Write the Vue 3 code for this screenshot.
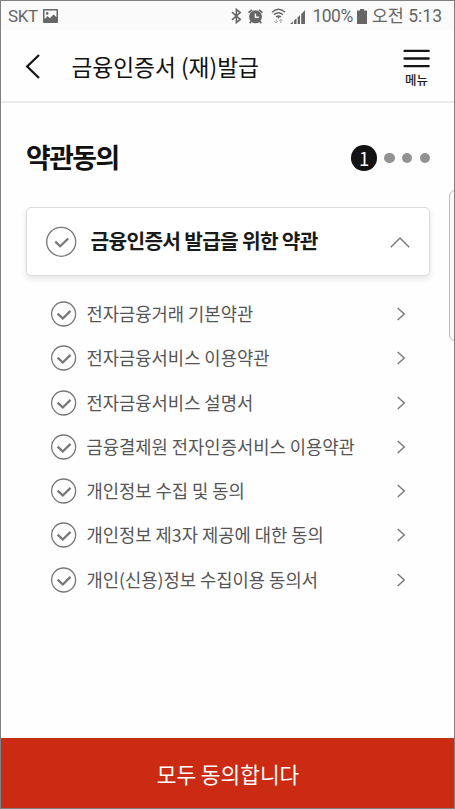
<script setup>
const terms = [
  '전자금융거래 기본약관',
  '전자금융서비스 이용약관',
  '전자금융서비스 설명서',
  '금융결제원 전자인증서비스 이용약관',
  '개인정보 수집 및 동의',
  '개인정보 제3자 제공에 대한 동의',
  '개인(신용)정보 수집이용 동의서',
]
</script>

<template>
  <div class="screen">
    <div class="status">
      <span class="carrier">SKT</span>
      <svg class="photo" width="15" height="14" viewBox="0 0 15 14">
        <path fill="#666" fill-rule="evenodd" d="M1 0h13q1 0 1 1v12q0 1-1 1H1q-1 0-1-1V1q0-1 1-1zM1.5 1.5v8.8l3-3.3 2.3 2.2 3.7-3.7 3 2.8V1.5zM4.2 3.1a1.3 1.3 0 1 1 0 2.6 1.3 1.3 0 0 1 0-2.6z" />
      </svg>
      <svg class="bluetooth" width="11" height="16" viewBox="0 0 11 16">
        <path fill="none" stroke="#666" stroke-width="1.6" d="M1 4.2l8.2 7.2-3.8 3.2V1.4l3.8 3.2L1 11.8" />
      </svg>
      <svg class="alarm" width="15" height="15" viewBox="0 0 15 15">
        <circle cx="7.5" cy="7.8" r="6.5" fill="#666" />
        <path d="M.5 3.7L4 .8M14.5 3.7L11 .8M3.2 12.3L1.8 14.2M11.8 12.3l1.4 1.9" stroke="#666" stroke-width="1.7" />
        <path d="M7.4 4.4v3.8h3.5" fill="none" stroke="#fafafa" stroke-width="1.4" />
      </svg>
      <svg class="wifi" width="15" height="16" viewBox="0 0 15 16">
        <path d="M1 4.2Q7.5-1.5 14 4.2M3 6.7q4.5-4 9 0M5 9q2.5-2 5 0" fill="none" stroke="#666" stroke-width="1.4" />
        <circle cx="7.5" cy="9.6" r="1" fill="#666" />
        <path d="M5.2 15v-3.6M3.5 13.3l1.7 1.7 1.7-1.7M9.8 15v-3.6M8.1 12.9l1.7-1.7 1.7 1.7" fill="none" stroke="#aaa" stroke-width="1" />
      </svg>
      <svg class="signal" width="16" height="15" viewBox="0 0 16 15">
        <path d="M0 15l3-2.5V15zM4 11.5l2.5-2.2V15H4zM7.7 8.3l2.3-2V15H7.7zM11.2 5.2L15 1v14h-3.8z" fill="#666" />
      </svg>
      <span class="percent">100%</span>
      <svg class="battery" width="10" height="15" viewBox="0 0 10 15">
        <path d="M3 0h4v1.4h3V15H0V1.4h3z" fill="#666" />
      </svg>
      <span class="clock">오전 5:13</span>
    </div>

    <header class="header">
      <svg class="back" width="15" height="25" viewBox="0 0 15 25">
        <path d="M14 1L2.2 12.5 14 24" fill="none" stroke="#161616" stroke-width="2.3" />
      </svg>
      <h1 class="title">금융인증서 (재)발급</h1>
      <div class="menu">
        <svg width="27" height="19" viewBox="0 0 27 19">
          <path d="M1.6 1.9h24M1.6 9.5h24M1.6 17.1h24" stroke="#161616" stroke-width="2.4" stroke-linecap="round" />
        </svg>
        <span class="menu-label">메뉴</span>
      </div>
    </header>

    <main class="content">
      <div class="heading-row">
        <h2 class="heading">약관동의</h2>
        <div class="steps">
          <span class="step-current">1</span>
          <span class="dot"></span>
          <span class="dot"></span>
          <span class="dot"></span>
        </div>
      </div>

      <div class="card">
        <svg class="card-check" width="31" height="31" viewBox="0 0 31 31" fill="none">
          <circle cx="15.2" cy="15.8" r="14.5" stroke="#777" stroke-width="1.3" />
          <path d="M9.3 15.6l4.9 4.7 8-7.8" stroke="#777" stroke-width="2.2" />
        </svg>
        <span class="card-title">금융인증서 발급을 위한 약관</span>
        <svg class="card-arrow" width="20" height="12" viewBox="0 0 20 12">
          <path d="M.8 11.2L10 2l9.2 9.2" fill="none" stroke="#777" stroke-width="1.4" />
        </svg>
      </div>

      <ul class="terms">
        <li v-for="term in terms" :key="term" class="term">
          <svg class="check" width="26" height="26" viewBox="0 0 26 26" fill="none">
            <circle cx="12.6" cy="13" r="12" stroke="#777" stroke-width="1.3" />
            <path d="M6.6 12.6l5.2 4.9 7.7-7.6" stroke="#777" stroke-width="2.3" />
          </svg>
          <span class="term-label">{{ term }}</span>
          <svg class="arrow" width="9" height="14" viewBox="0 0 9 14">
            <path d="M.7.9L7.3 7 .7 13.1" fill="none" stroke="#777" stroke-width="1.4" />
          </svg>
        </li>
      </ul>
    </main>

    <button class="agree">모두 동의합니다</button>
    <div class="edge-handle"></div>
  </div>
</template>

<style>
body {
  background: #fff;
}
</style>

<style scoped>
.screen {
  position: relative;
  display: flex;
  flex-direction: column;
  box-sizing: border-box;
  width: 455px;
  height: 809px;
  border: 1px solid #808080;
  overflow: hidden;
  background: #fefefe;
  font-family: "Noto Sans CJK KR", sans-serif;
}
.status {
  display: flex;
  align-items: center;
  flex: none;
  box-sizing: border-box;
  height: 29px;
  padding: 1px 12px 0 7px;
  background: #fafafa;
  color: #666;
  font-family: Roboto, "Noto Sans CJK KR", sans-serif;
  font-size: 17.5px;
  line-height: 28px;
  white-space: nowrap;
}
.carrier {
  width: 34.5px;
  font-size: 17px;
  letter-spacing: -0.4px;
}
.bluetooth {
  margin-left: auto;
}
.alarm {
  margin-left: 6px;
}
.wifi {
  margin-left: 8px;
}
.signal {
  margin-left: 4px;
}
.percent {
  margin-left: 6px;
  letter-spacing: -0.5px;
}
.battery {
  margin-left: 4px;
}
.clock {
  margin-left: 5px;
}
.header {
  display: flex;
  align-items: center;
  flex: none;
  box-sizing: border-box;
  height: 73px;
  padding: 1px 24px 0 24px;
  border-bottom: 2px solid #ebebeb;
}
.title {
  margin: 0 auto 0 31.5px;
  padding-top: 1px;
  font-size: 22.7px;
  font-weight: 400;
  line-height: 34px;
  color: #111;
  white-space: nowrap;
}
.menu {
  display: flex;
  flex-direction: column;
  align-items: center;
  padding-top: 5px;
}
.menu-label {
  margin-top: 3px;
  font-size: 12.5px;
  font-weight: 500;
  line-height: 18px;
  color: #222;
}
.content {
  flex: 1;
  padding: 35px 24px 0 25px;
}
.heading-row {
  display: flex;
  align-items: center;
  justify-content: space-between;
  height: 38px;
}
.heading {
  margin: 0;
  padding-bottom: 1px;
  font-size: 26.8px;
  font-weight: 700;
  line-height: 38px;
  letter-spacing: -1.5px;
  color: #111;
}
.steps {
  display: flex;
  align-items: center;
  gap: 7.2px;
  padding-top: 2px;
}
.step-current {
  width: 25.6px;
  height: 25.6px;
  border-radius: 50%;
  background: #131313;
  color: #fff;
  font-size: 18.5px;
  line-height: 27px;
  text-align: center;
}
.dot {
  width: 10.5px;
  height: 10.5px;
  border-radius: 50%;
  background: #929292;
}
.card {
  display: flex;
  align-items: center;
  box-sizing: border-box;
  height: 69px;
  margin-top: 31px;
  padding: 0 19px 0 19px;
  border: 1px solid #dedede;
  border-radius: 5px;
  background: #fff;
  box-shadow: 0 3px 6px rgba(0, 0, 0, 0.1);
}
.card-title {
  margin: 0 auto 4px 13.5px;
  font-size: 20.3px;
  font-weight: 700;
  line-height: 30px;
  letter-spacing: -0.7px;
  color: #1a1a1a;
  white-space: nowrap;
}
.terms {
  margin: 0;
  padding: 16px 24px 0 25px;
  list-style: none;
}
.term {
  display: flex;
  align-items: center;
  height: 44.25px;
}
.term-label {
  margin: 0 auto 0 9.5px;
  padding-bottom: 2px;
  font-size: 17.7px;
  line-height: 26px;
  color: #555;
  white-space: nowrap;
}
.agree {
  flex: none;
  height: 70px;
  padding: 1px 0 0 1px;
  border: 0;
  border-top: 1px solid #bd3519;
  background: #ca2b12;
  color: #fff;
  font-family: inherit;
  font-size: 21.4px;
  line-height: 32px;
}
.edge-handle {
  position: absolute;
  top: 189px;
  right: -2px;
  box-sizing: border-box;
  width: 7px;
  height: 151px;
  border: 1px solid #bbb;
  border-radius: 6px 0 0 6px;
  background: #fafafa;
}
</style>
